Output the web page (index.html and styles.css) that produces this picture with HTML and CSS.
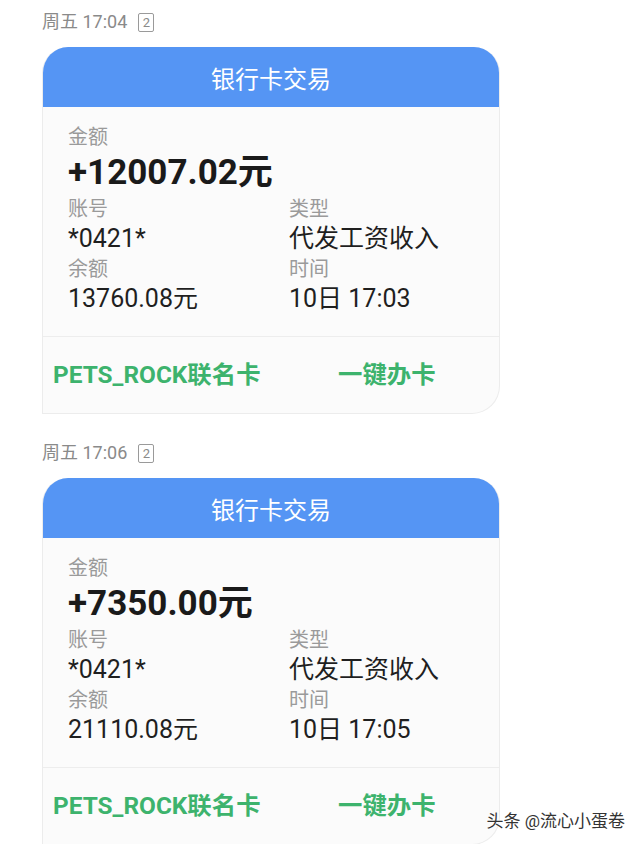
FILE: index.html
```html
<!DOCTYPE html>
<html lang="zh-CN">
<head>
  <meta charset="UTF-8" />
  <title>银行卡交易</title>
  <link rel="stylesheet" href="styles.css">
</head>
<body>
  <div class="thread">
    <div class="msg">
      <div class="stamp">周五 17:04 <span class="sim">2</span></div>
      <div class="card">
        <div class="card-head">银行卡交易</div>
        <div class="card-body">
          <div class="label">金额</div>
          <div class="amount">+12007.02元</div>
          <div class="grid">
            <div>
              <div class="label">账号</div>
              <div class="value">*0421*</div>
            </div>
            <div>
              <div class="label">类型</div>
              <div class="value">代发工资收入</div>
            </div>
            <div>
              <div class="label">余额</div>
              <div class="value">13760.08元</div>
            </div>
            <div>
              <div class="label">时间</div>
              <div class="value">10日 17:03</div>
            </div>
          </div>
        </div>
        <div class="card-foot">
          <span class="link-left">PETS_ROCK联名卡</span>
          <span class="link-right">一键办卡</span>
        </div>
      </div>
    </div>

    <div class="msg">
      <div class="stamp">周五 17:06 <span class="sim">2</span></div>
      <div class="card">
        <div class="card-head">银行卡交易</div>
        <div class="card-body">
          <div class="label">金额</div>
          <div class="amount">+7350.00元</div>
          <div class="grid">
            <div>
              <div class="label">账号</div>
              <div class="value">*0421*</div>
            </div>
            <div>
              <div class="label">类型</div>
              <div class="value">代发工资收入</div>
            </div>
            <div>
              <div class="label">余额</div>
              <div class="value">21110.08元</div>
            </div>
            <div>
              <div class="label">时间</div>
              <div class="value">10日 17:05</div>
            </div>
          </div>
        </div>
        <div class="card-foot">
          <span class="link-left">PETS_ROCK联名卡</span>
          <span class="link-right">一键办卡</span>
        </div>
      </div>
    </div>
  </div>

  <div class="watermark">头条 @流心小蛋卷</div>
</body>
</html>
```

FILE: styles.css
```css
body {
  margin: 0;
  background-color: #fff;
  font-family: Roboto, "Noto Sans CJK SC", sans-serif;
  color: #1f1f1f;
  height: 844px;
  overflow: hidden;
  position: relative;
}

.thread {
  padding-left: 42px;
}

.msg {
  padding-top: 12px;
  margin-bottom: 17px;
}

/* 时间戳 + 卡槽标记 */
.stamp {
  font-size: 18px;
  line-height: 20px;
  color: #8a8a8a;
  display: flex;
  align-items: center;
  gap: 11px;
  margin-bottom: 15px;
}

.sim {
  display: inline-flex;
  align-items: center;
  justify-content: center;
  width: 14px;
  height: 17px;
  border: 1px solid #9a9a9a;
  border-radius: 2px;
  font-size: 13px;
  line-height: 1;
  color: #8a8a8a;
}

.card {
  width: 458px;
  border-radius: 26px 26px 28px 0;
  background-color: #fbfbfb;
  border: 1px solid #ececec;
  border-top: none;
  box-sizing: border-box;
  overflow: hidden;
}

.card-head {
  height: 60px;
  background-color: #5595f4;
  color: #fff;
  font-size: 24px;
  display: flex;
  align-items: center;
  justify-content: center;
  margin: 0 -1px;
}

.card-body {
  padding: 17px 0 20px 25px;
  border-bottom: 1px solid #ededed;
}

.label {
  font-size: 20px;
  line-height: 26px;
  color: #9a9a9a;
}

.amount {
  font-size: 35px;
  font-weight: bold;
  line-height: 46px;
  color: #1a1a1a;
}

.grid {
  display: grid;
  grid-template-columns: 221px 1fr;
}

.value {
  font-size: 25px;
  line-height: 34px;
  color: #1f1f1f;
}

.card-foot {
  height: 76px;
  box-sizing: border-box;
  padding-bottom: 5px;
  display: flex;
  align-items: center;
  font-size: 24.4px;
  font-weight: bold;
  color: #3db36d;
}

.link-left {
  margin-left: 10px;
  width: 285px;
}

/* 右下角水印 */
.watermark {
  position: absolute;
  right: 15px;
  bottom: 12px;
  font-size: 17px;
  color: #333;
  text-shadow: 0 0 2px #fff, 0 0 2px #fff;
}
```
